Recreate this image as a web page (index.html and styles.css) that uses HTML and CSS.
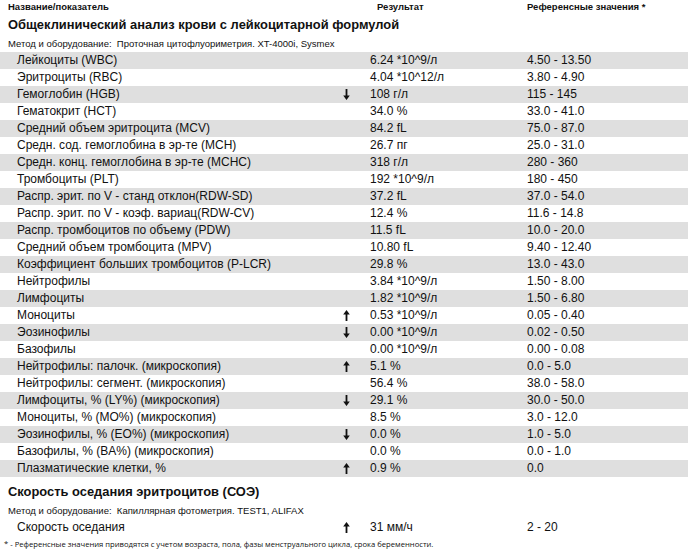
FILE: index.html
```html
<!DOCTYPE html>
<html lang="ru">
<head>
<meta charset="utf-8">
<link rel="stylesheet" href="styles.css">
</head>
<body>
<div class="head">
  <span class="h-name">Название/показатель</span>
  <span class="h-res">Результат</span>
  <span class="h-ref">Референсные значения *</span>
</div>
<div class="title">Общеклинический анализ крови с лейкоцитарной формулой</div>
<div class="method">Метод и оборудование:&nbsp; Проточная цитофлуориметрия. XT-4000i, Sysmex</div>
<div class="table">
  <div class="row"><span class="name">Лейкоциты (WBC)</span><span class="arr"></span><span class="val">6.24 *10^9/л</span><span class="ref">4.50 - 13.50</span></div>
  <div class="row"><span class="name">Эритроциты (RBC)</span><span class="arr"></span><span class="val">4.04 *10^12/л</span><span class="ref">3.80 - 4.90</span></div>
  <div class="row"><span class="name">Гемоглобин (HGB)</span><span class="arr"><svg class="ico" viewBox="0 0 7 11"><path d="M2.6 0h1.8v6.5h2.4L3.5 11 0.2 6.5h2.4z"/></svg></span><span class="val">108 г/л</span><span class="ref">115 - 145</span></div>
  <div class="row"><span class="name">Гематокрит (HCT)</span><span class="arr"></span><span class="val">34.0 %</span><span class="ref">33.0 - 41.0</span></div>
  <div class="row"><span class="name">Средний объем эритроцита (MCV)</span><span class="arr"></span><span class="val">84.2 fL</span><span class="ref">75.0 - 87.0</span></div>
  <div class="row"><span class="name">Средн. сод. гемоглобина в эр-те (MCH)</span><span class="arr"></span><span class="val">26.7 пг</span><span class="ref">25.0 - 31.0</span></div>
  <div class="row"><span class="name">Средн. конц. гемоглобина в эр-те (MCHC)</span><span class="arr"></span><span class="val">318 г/л</span><span class="ref">280 - 360</span></div>
  <div class="row"><span class="name">Тромбоциты (PLT)</span><span class="arr"></span><span class="val">192 *10^9/л</span><span class="ref">180 - 450</span></div>
  <div class="row"><span class="name">Распр. эрит. по V - станд отклон(RDW-SD)</span><span class="arr"></span><span class="val">37.2 fL</span><span class="ref">37.0 - 54.0</span></div>
  <div class="row"><span class="name">Распр. эрит. по V - коэф. вариац(RDW-CV)</span><span class="arr"></span><span class="val">12.4 %</span><span class="ref">11.6 - 14.8</span></div>
  <div class="row"><span class="name">Распр. тромбоцитов по объему (PDW)</span><span class="arr"></span><span class="val">11.5 fL</span><span class="ref">10.0 - 20.0</span></div>
  <div class="row"><span class="name">Средний объем тромбоцита (MPV)</span><span class="arr"></span><span class="val">10.80 fL</span><span class="ref">9.40 - 12.40</span></div>
  <div class="row"><span class="name">Коэффициент больших тромбоцитов (P-LCR)</span><span class="arr"></span><span class="val">29.8 %</span><span class="ref">13.0 - 43.0</span></div>
  <div class="row"><span class="name">Нейтрофилы</span><span class="arr"></span><span class="val">3.84 *10^9/л</span><span class="ref">1.50 - 8.00</span></div>
  <div class="row"><span class="name">Лимфоциты</span><span class="arr"></span><span class="val">1.82 *10^9/л</span><span class="ref">1.50 - 6.80</span></div>
  <div class="row"><span class="name">Моноциты</span><span class="arr"><svg class="ico" viewBox="0 0 7 11"><path d="M2.6 11h1.8V4.5h2.4L3.5 0 0.2 4.5h2.4z"/></svg></span><span class="val">0.53 *10^9/л</span><span class="ref">0.05 - 0.40</span></div>
  <div class="row"><span class="name">Эозинофилы</span><span class="arr"><svg class="ico" viewBox="0 0 7 11"><path d="M2.6 0h1.8v6.5h2.4L3.5 11 0.2 6.5h2.4z"/></svg></span><span class="val">0.00 *10^9/л</span><span class="ref">0.02 - 0.50</span></div>
  <div class="row"><span class="name">Базофилы</span><span class="arr"></span><span class="val">0.00 *10^9/л</span><span class="ref">0.00 - 0.08</span></div>
  <div class="row"><span class="name">Нейтрофилы: палочк. (микроскопия)</span><span class="arr"><svg class="ico" viewBox="0 0 7 11"><path d="M2.6 11h1.8V4.5h2.4L3.5 0 0.2 4.5h2.4z"/></svg></span><span class="val">5.1 %</span><span class="ref">0.0 - 5.0</span></div>
  <div class="row"><span class="name">Нейтрофилы: сегмент. (микроскопия)</span><span class="arr"></span><span class="val">56.4 %</span><span class="ref">38.0 - 58.0</span></div>
  <div class="row"><span class="name">Лимфоциты, % (LY%) (микроскопия)</span><span class="arr"><svg class="ico" viewBox="0 0 7 11"><path d="M2.6 0h1.8v6.5h2.4L3.5 11 0.2 6.5h2.4z"/></svg></span><span class="val">29.1 %</span><span class="ref">30.0 - 50.0</span></div>
  <div class="row"><span class="name">Моноциты, % (MO%) (микроскопия)</span><span class="arr"></span><span class="val">8.5 %</span><span class="ref">3.0 - 12.0</span></div>
  <div class="row"><span class="name">Эозинофилы, % (EO%) (микроскопия)</span><span class="arr"><svg class="ico" viewBox="0 0 7 11"><path d="M2.6 0h1.8v6.5h2.4L3.5 11 0.2 6.5h2.4z"/></svg></span><span class="val">0.0 %</span><span class="ref">1.0 - 5.0</span></div>
  <div class="row"><span class="name">Базофилы, % (BA%) (микроскопия)</span><span class="arr"></span><span class="val">0.0 %</span><span class="ref">0.0 - 1.0</span></div>
  <div class="row"><span class="name">Плазматические клетки, %</span><span class="arr"><svg class="ico" viewBox="0 0 7 11"><path d="M2.6 11h1.8V4.5h2.4L3.5 0 0.2 4.5h2.4z"/></svg></span><span class="val">0.9 %</span><span class="ref">0.0</span></div>
</div>
<div class="title title2">Скорость оседания эритроцитов (СОЭ)</div>
<div class="method method2">Метод и оборудование:&nbsp; Капиллярная фотометрия. TEST1, ALIFAX</div>
<div class="table table2">
  <div class="row"><span class="name">Скорость оседания</span><span class="arr"><svg class="ico" viewBox="0 0 7 11"><path d="M2.6 11h1.8V4.5h2.4L3.5 0 0.2 4.5h2.4z"/></svg></span><span class="val">31 мм/ч</span><span class="ref">2 - 20</span></div>
</div>
<div class="foot">* - Референсные значения приводятся с учетом возраста, пола, фазы менструального цикла, срока беременности.</div>
</body>
</html>
```
FILE: styles.css
```css
html, body {
  margin: 0;
  padding: 0;
  background: #fff;
}
body {
  width: 688px;
  height: 555px;
  overflow: hidden;
  font-family: "Liberation Sans", Arial, sans-serif;
  color: #111;
}
.head {
  display: grid;
  grid-template-columns: 377px 150px 1fr;
  padding-left: 8px;
  height: 14px;
  line-height: 14px;
  font-size: 9.5px;
  font-weight: bold;
}
.h-res { margin-left: -8px; }
.h-ref { margin-left: -8px; }
.title {
  padding-left: 8px;
  font-size: 12.9px;
  font-weight: bold;
  height: 20px;
  line-height: 20px;
  margin-top: 1px;
}
.method {
  padding-left: 8px;
  font-size: 9.5px;
  height: 17px;
  line-height: 17px;
}
.table {
  display: flex;
  flex-direction: column;
}
.row {
  display: grid;
  grid-template-columns: 340px 30px 157px 1fr;
  height: 17px;
  line-height: 17px;
  font-size: 12px;
}
.table .row:nth-child(odd) {
  background: #dfdfdf;
}
.table2 .row:nth-child(odd) {
  background: transparent;
}
.name {
  padding-left: 17px;
  white-space: nowrap;
}
.arr {
  display: flex;
  align-items: center;
  justify-content: flex-start;
  padding-left: 3px;
}
.ico {
  width: 7px;
  height: 11px;
  fill: #111;
}
.val, .ref {
  white-space: nowrap;
}
.title2 {
  margin-top: 5px;
}
.method2 {
  height: 17px;
}
.foot {
  margin-top: 2px;
  padding-left: 4px;
  font-family: "Open Sans", sans-serif;
  font-size: 7.65px;
  line-height: 12px;
}
```
